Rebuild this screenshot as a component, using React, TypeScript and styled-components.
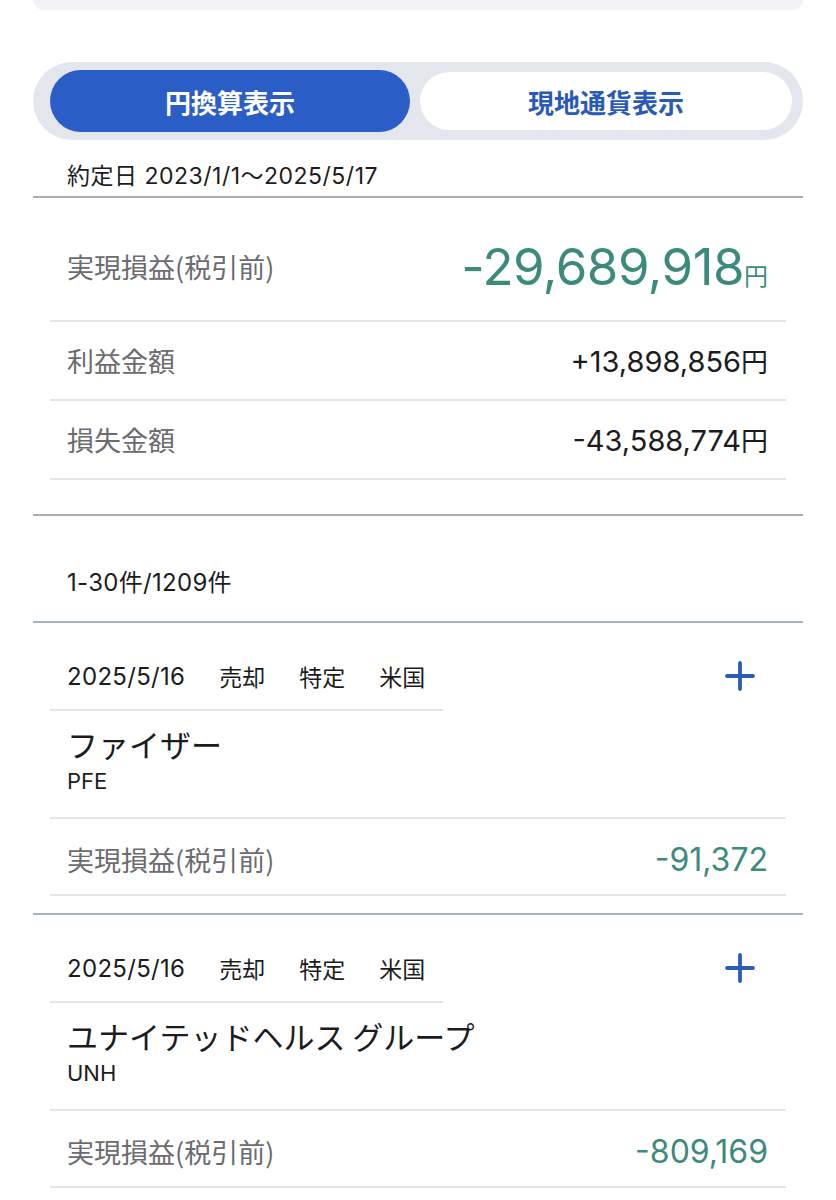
import React from 'react'
import styled, { createGlobalStyle } from 'styled-components'

const GlobalStyle = createGlobalStyle`
  body {
    margin: 0;
    background: #ffffff;
    font-family: "Inter", "Noto Sans CJK JP", sans-serif;
    color: #1c1c1e;
  }
`;

const Page = styled.div`
  padding: 0 33px;
`;

const TopCard = styled.div`
  height: 10px;
  background: #f2f3f6;
  border-radius: 0 0 14px 14px;
`;

const Toggle = styled.div`
  margin-top: 52px;
  display: flex;
  align-items: center;
  gap: 10px;
  height: 78px;
  box-sizing: border-box;
  padding: 0 11px 0 17px;
  border-radius: 39px;
  background: #e4e6ee;
`;

const ToggleButton = styled.button<{ $active?: boolean }>`
  border: 0;
  cursor: pointer;
  font-family: "Noto Sans CJK JP", sans-serif;
  font-size: 26px;
  font-weight: 700;
  border-radius: 31px;
  ${(p) =>
    p.$active
      ? `width: 360px; height: 62px; background: #2a5ec6; color: #ffffff;`
      : `flex: 1; height: 58px; background: #ffffff; color: #2a5ab8;`}
`;

const Period = styled.div`
  padding: 21px 0 5px 34px;
  font-size: 23px;
  line-height: 30px;
  letter-spacing: 0.5px;
  border-bottom: 2px solid #a8acb4;
`;

const Section = styled.div`
  padding: 0 17px;
`;

const SummaryRow = styled.div<{ $big?: boolean }>`
  display: flex;
  align-items: center;
  justify-content: space-between;
  padding: ${(p) => (p.$big ? '14px' : '0')} 18px 0 17px;
  height: ${(p) => (p.$big ? '124px' : '79px')};
  box-sizing: border-box;
  border-bottom: 2px solid #e4e5e9;
`;

const Label = styled.span`
  font-family: "Noto Sans CJK JP", sans-serif;
  font-size: 27px;
  color: #6b6b70;
`;

const Amount = styled.span<{ $green?: boolean }>`
  font-size: ${(p) => (p.$green ? '32px' : '29px')};
  color: ${(p) => (p.$green ? '#3b8a7b' : '#1c1c1e')};
`;

const BigAmount = styled.span`
  font-size: 51px;
  color: #3b8a7b;
  letter-spacing: -0.5px;
`;

const Yen = styled.span<{ $small?: boolean }>`
  font-family: "Noto Sans CJK JP", sans-serif;
  font-size: ${(p) => (p.$small ? '24px' : '27px')};
  letter-spacing: 0;
`;

const SummaryEnd = styled.div`
  height: 34px;
  border-bottom: 2px solid #a8acb4;
`;

const Count = styled.div`
  padding: 51px 0 23px 34px;
  font-size: 24px;
  line-height: 31px;
  letter-spacing: 0.3px;
  border-bottom: 2px solid #a9b2c2;
`;

const Item = styled.div`
  padding: 14px 17px 17px;
  border-bottom: 2px solid #a9b2c2;
`;

const ItemHead = styled.div`
  display: flex;
  align-items: flex-start;
`;

const TradeInfo = styled.div`
  width: 393px;
  height: 74px;
  box-sizing: border-box;
  padding: 6px 0 0 17px;
  display: flex;
  align-items: center;
  gap: 34px;
  font-size: 23px;
  border-bottom: 2px solid #e4e5e9;
`;

const TradeDate = styled.span`
  font-size: 24px;
  letter-spacing: 0.3px;
`;

const Tag = styled.span`
  font-family: "Noto Sans CJK JP", sans-serif;
`;

const PlusButton = styled.button`
  margin-left: auto;
  margin-right: 31px;
  height: 72px;
  padding: 6px 0 0;
  border: 0;
  background: none;
  display: flex;
  align-items: center;
  cursor: pointer;
`;

const NameBlock = styled.div`
  padding: 14px 17px 22px;
  border-bottom: 2px solid #e4e5e9;
`;

const StockName = styled.div`
  font-family: "Noto Sans CJK JP", sans-serif;
  font-size: 31px;
  line-height: 38px;
`;

const Ticker = styled.div`
  font-size: 22px;
  line-height: 28px;
  margin-top: 4px;
`;

const ResultRow = styled.div`
  display: flex;
  align-items: center;
  justify-content: space-between;
  height: 77px;
  box-sizing: border-box;
  padding: 6px 18px 0 17px;
  border-bottom: 2px solid #e4e5e9;
`;

const PlusIcon = () => (
  <svg width="30" height="30" viewBox="0 0 30 30">
    <path d="M15 2v26M2 15h26" stroke="#2a5cb8" strokeWidth="3.8" strokeLinecap="round" />
  </svg>
);

type Trade = {
  date: string
  side: string
  account: string
  market: string
  name: string
  ticker: string
  pl: string
}

const trades: Trade[] = [
  { date: '2025/5/16', side: '売却', account: '特定', market: '米国', name: 'ファイザー', ticker: 'PFE', pl: '-91,372' },
  { date: '2025/5/16', side: '売却', account: '特定', market: '米国', name: 'ユナイテッドヘルス グループ', ticker: 'UNH', pl: '-809,169' },
]

export default function App() {
  return (
    <>
      <GlobalStyle />
      <Page>
        <TopCard />
        <Toggle>
          <ToggleButton $active>円換算表示</ToggleButton>
          <ToggleButton>現地通貨表示</ToggleButton>
        </Toggle>
        <Period>約定日 2023/1/1〜2025/5/17</Period>
        <Section>
          <SummaryRow $big>
            <Label>実現損益(税引前)</Label>
            <BigAmount>-29,689,918<Yen $small>円</Yen></BigAmount>
          </SummaryRow>
          <SummaryRow>
            <Label>利益金額</Label>
            <Amount>+13,898,856<Yen>円</Yen></Amount>
          </SummaryRow>
          <SummaryRow>
            <Label>損失金額</Label>
            <Amount>-43,588,774<Yen>円</Yen></Amount>
          </SummaryRow>
        </Section>
        <SummaryEnd />
        <Count>1-30件/1209件</Count>
        {trades.map((t, i) => (
          <Item key={i}>
            <ItemHead>
              <TradeInfo>
                <TradeDate>{t.date}</TradeDate>
                <Tag>{t.side}</Tag>
                <Tag>{t.account}</Tag>
                <Tag>{t.market}</Tag>
              </TradeInfo>
              <PlusButton aria-label="詳細">
                <PlusIcon />
              </PlusButton>
            </ItemHead>
            <NameBlock>
              <StockName>{t.name}</StockName>
              <Ticker>{t.ticker}</Ticker>
            </NameBlock>
            <ResultRow>
              <Label>実現損益(税引前)</Label>
              <Amount $green>{t.pl}</Amount>
            </ResultRow>
          </Item>
        ))}
      </Page>
    </>
  )
}
